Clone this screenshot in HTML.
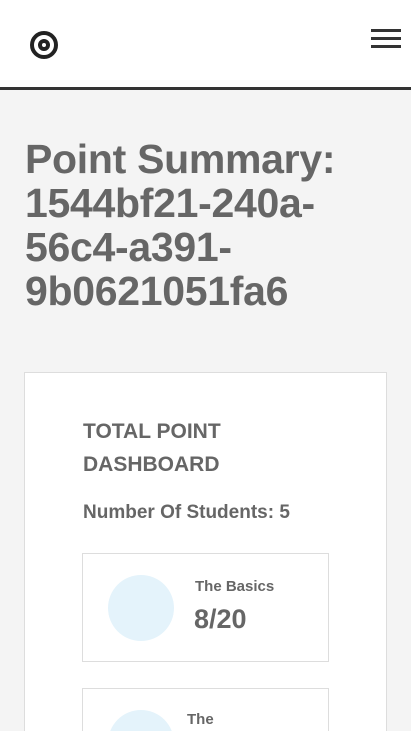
<!DOCTYPE html>
<html><head><meta charset="utf-8"><style>
*{margin:0;padding:0;box-sizing:border-box}
html,body{width:411px;height:731px;overflow:hidden}
body{position:relative;background:#f4f4f4;font-family:"Liberation Sans",sans-serif;color:#666}
.hdr{position:absolute;left:0;top:0;width:411px;height:90px;background:#fff;border-bottom:3px solid #333}
.logo{position:absolute;left:30px;top:31px;width:28px;height:28px;border:4px solid #222;border-radius:50%}
.logo:after{content:"";position:absolute;left:4px;top:4px;width:12px;height:12px;border:4px solid #222;border-radius:50%;box-sizing:border-box}
.hb{position:absolute;left:371px;width:30px;height:3px;background:#333}
h1{position:absolute;left:25px;top:137px;font-size:41px;line-height:44px;font-weight:bold;color:#666;letter-spacing:-0.3px;width:380px}
.card{position:absolute;left:24px;top:372px;width:363px;height:359px;background:#fff;border:1px solid #ddd;border-bottom:none}
.t{position:absolute;left:83px;top:415px;font-size:21px;line-height:33px;font-weight:bold;color:#666}
.n{position:absolute;left:83px;top:502px;font-size:19px;font-weight:bold;color:#666}
.box{position:absolute;left:82px;width:247px;height:109px;background:#fff;border:1px solid #ddd;overflow:hidden}
.c{position:absolute;left:25px;top:21px;width:66px;height:66px;border-radius:50%;background:#e4f3fb}
.bt{position:absolute;left:112px;top:24px;font-size:15px;font-weight:bold}
.bv{position:absolute;left:111px;top:50px;font-size:27px;font-weight:bold}
</style></head><body>
<div class="hdr"><div class="logo"></div>
<div class="hb" style="top:29px"></div><div class="hb" style="top:37px"></div><div class="hb" style="top:45px"></div></div>
<h1>Point Summary:<br>1544bf21-240a-<br>56c4-a391-<br>9b0621051fa6</h1>
<div class="card"></div>
<div class="t">TOTAL POINT<br>DASHBOARD</div>
<div class="n">Number Of Students: 5</div>
<div class="box" style="top:553px"><div class="c"></div><div class="bt">The Basics</div><div class="bv">8/20</div></div>
<div class="box" style="top:688px;height:43px;border-bottom:none"><div class="c" style="top:21px"></div><div class="bt" style="left:104px;top:22px">The</div></div>
</body></html>
